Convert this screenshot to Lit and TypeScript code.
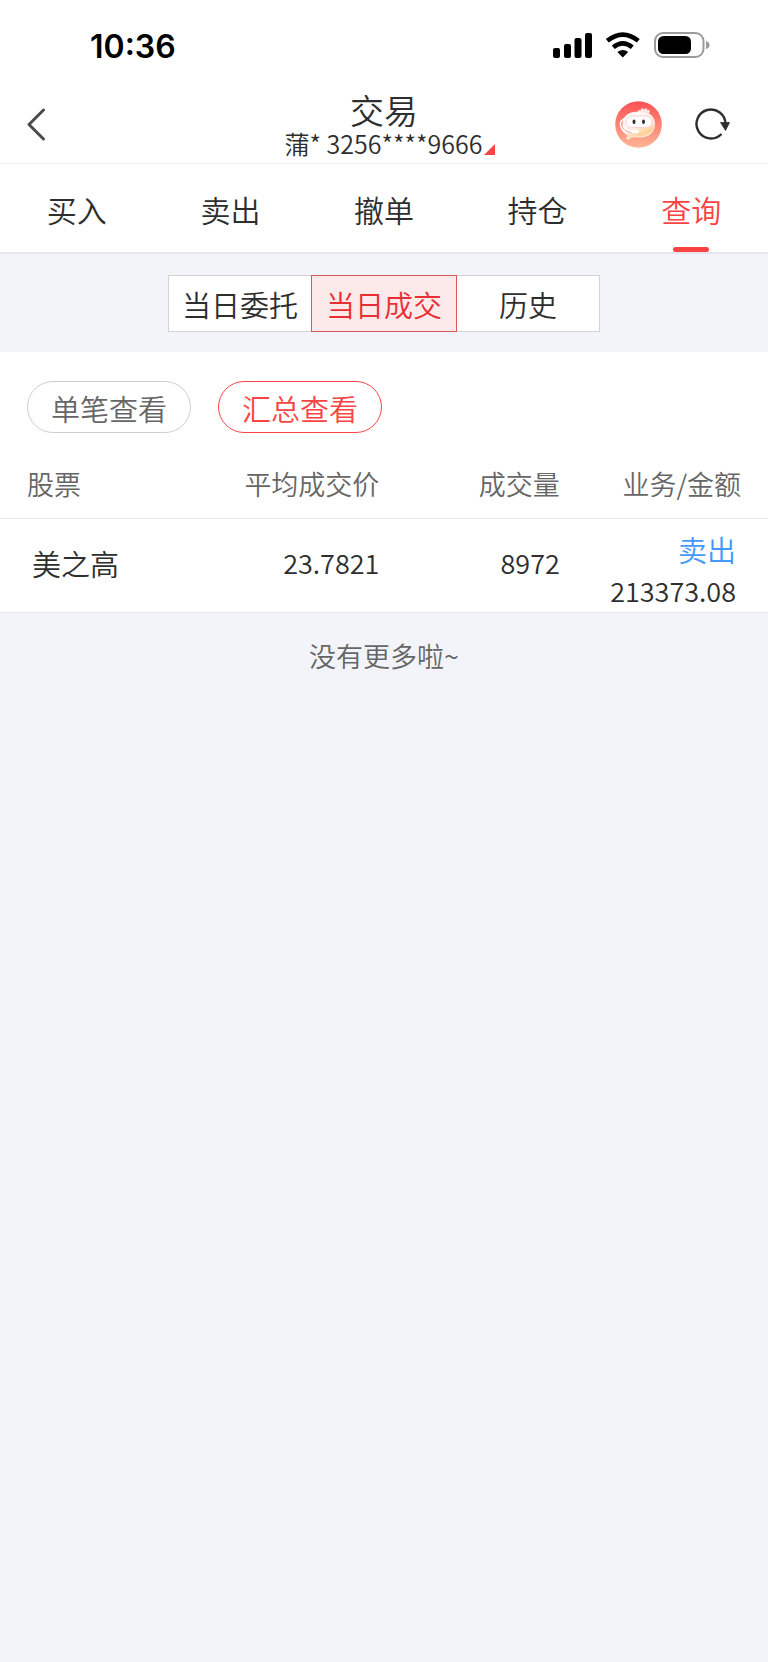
import { LitElement, html, css, svg } from "lit";
import { customElement, state } from "lit/decorators.js";

interface Deal {
  name: string;
  price: string;
  volume: string;
  side: string;
  amount: string;
}

const TABS = ["买入", "卖出", "撤单", "持仓", "查询"];
const SEGMENTS = ["当日委托", "当日成交", "历史"];
const VIEWS = ["单笔查看", "汇总查看"];
const DEALS: Deal[] = [
  { name: "美之高", price: "23.7821", volume: "8972", side: "卖出", amount: "213373.08" },
];

@customElement("status-bar")
class StatusBar extends LitElement {
  static styles = css`
    :host {
      display: flex;
      justify-content: space-between;
      align-items: center;
      height: 90px;
      padding: 0 58px 0 90px;
      color: #000;
    }
    .time {
      font: 600 32px/40px Inter, "Liberation Sans", sans-serif;
      padding-top: 3px;
    }
    svg {
      display: block;
    }
  `;

  render() {
    return html`
      <span class="time">10:36</span>
      <svg width="158" height="28" viewBox="0 0 158 28" role="img" aria-label="信号、无线网络、电池">
        <rect x="1" y="17" width="7" height="10" rx="2" />
        <rect x="12" y="13" width="7" height="14" rx="2" />
        <rect x="22.5" y="7" width="7" height="20" rx="2" />
        <rect x="33" y="2" width="7" height="25" rx="2" />
        <g fill="none" stroke="#000" stroke-width="4.6">
          <path d="M55.3 9.8 Q70.8 -2.6 86.3 9.8" />
          <path d="M61.3 16.2 Q70.8 8.4 80.3 16.2" />
        </g>
        <path d="M65.4 21 Q70.8 16.8 76.2 21 L70.8 26.5 Z" />
        <rect x="103" y="2" width="48.5" height="24" rx="8" fill="none" stroke="#9b9b9b" stroke-width="2" />
        <rect x="106" y="5" width="33" height="18" rx="5.5" />
        <path d="M154 10 Q157.500 11 157.500 14 T154 18 Z" fill="#9b9b9b" />
      </svg>
    `;
  }
}

const backIcon = svg`<path d="M17.500 3 L3 17.500 L17.500 32" fill="none" stroke="#4a4a4a" stroke-width="3" stroke-linecap="round" stroke-linejoin="round" />`;

@customElement("app-root")
class AppRoot extends LitElement {
  @state() tab = 4;
  @state() segment = 1;
  @state() view = 1;

  static styles = css`
    :host {
      display: flex;
      flex-direction: column;
      min-height: 100vh;
      background: #f3f4f9;
      color: #2e2e2e;
      font-family: "Noto Sans CJK SC", sans-serif;
      font-weight: 350;
    }
    * {
      box-sizing: border-box;
    }
    button {
      margin: 0;
      padding: 0;
      border: 0;
      background: none;
      color: inherit;
      font: inherit;
      cursor: pointer;
    }
    svg {
      display: block;
    }
    .top {
      background: #fff;
    }
    .header {
      display: grid;
      grid-template-columns: 1fr auto 1fr;
      align-items: center;
      height: 74px;
      padding: 0 26px 5px;
      border-bottom: 1px solid #ebecf5;
    }
    .back {
      justify-self: start;
    }
    .heading {
      display: flex;
      flex-direction: column;
      align-items: center;
      margin-left: 12px;
    }
    .title {
      margin: 0;
      font-size: 34px;
      line-height: 38px;
      font-weight: 350;
      padding-right: 12px;
    }
    .account {
      display: flex;
      align-items: flex-end;
      font-size: 25px;
      line-height: 28px;
    }
    .corner {
      margin: 0 0 2px 2px;
    }
    .actions {
      justify-self: end;
      display: flex;
      align-items: center;
      gap: 32px;
      padding-right: 12px;
    }
    .tabs {
      display: flex;
      height: 90px;
      background: #fff;
      border-bottom: 2px solid #e4e5ef;
    }
    .tab {
      flex: 1;
      display: grid;
      grid-template-rows: 1fr auto;
      justify-items: center;
      align-items: center;
      padding-top: 6px;
      font-size: 30px;
      line-height: 40px;
    }
    .tab::after {
      content: "";
      width: 36px;
      height: 5px;
      border-radius: 3px;
    }
    .tab.on {
      color: #fa4444;
    }
    .tab.on::after {
      background: #fa4444;
    }
    .segments {
      display: flex;
      justify-content: center;
      padding: 21px 0 20px;
    }
    .segment {
      width: 144px;
      height: 57px;
      background: #fff;
      border: 1px solid #d3d3d3;
      font-size: 29px;
      line-height: 40px;
    }
    .segment + .segment {
      margin-left: -1px;
    }
    .segment.on {
      position: relative;
      width: 146px;
      background: #fce9ea;
      border-color: #d9575b;
      color: #e92f33;
    }
    .panel {
      background: #fff;
    }
    .views {
      display: flex;
      gap: 27px;
      padding: 29px 27px 17px;
    }
    .view {
      width: 164px;
      height: 52px;
      border: 1px solid #cfcfcf;
      border-radius: 26px;
      color: #666;
      font-size: 29px;
      line-height: 40px;
      padding-top: 1px;
    }
    .view.on {
      border-color: #fa4444;
      color: #fa4444;
    }
    .deals {
      width: 100%;
      border-collapse: collapse;
      table-layout: fixed;
      text-align: right;
    }
    .c1 {
      width: 24%;
    }
    .c2 {
      width: 25.4%;
    }
    .c3 {
      width: 23.5%;
    }
    th {
      height: 68px;
      padding: 0;
      border-bottom: 1px solid #ebebeb;
      color: #666;
      font-size: 27px;
      line-height: 40px;
      font-weight: 350;
    }
    td {
      height: 94px;
      padding: 0 0 5px;
      border-bottom: 1px solid #e8e9ef;
      font-size: 27px;
      line-height: 42px;
    }
    th:first-child {
      padding-left: 27px;
      text-align: left;
    }
    th:last-child {
      padding-right: 27px;
    }
    td:first-child {
      padding-left: 32px;
      text-align: left;
      font-size: 29px;
    }
    td:last-child {
      padding: 9px 32px 0 0;
    }
    .side {
      display: block;
      color: #449afa;
      font-size: 29px;
    }
    .amount {
      display: block;
    }
    .end {
      margin: 0;
      padding: 23px 0;
      color: #666;
      text-align: center;
      font-size: 27px;
      line-height: 40px;
    }
  `;

  render() {
    return html`
      <div class="top">
        <status-bar></status-bar>
        <header class="header">
          <button class="back" aria-label="返回">
            <svg width="21" height="35" viewBox="0 0 21 35">${backIcon}</svg>
          </button>
          <div class="heading">
            <h1 class="title">交易</h1>
            <button class="account">
              <span>蒲* 3256****9666</span>
              <svg class="corner" width="11" height="11" viewBox="0 0 11 11">
                <path d="M11 0 V11 H0 Z" fill="#fa4444" />
              </svg>
            </button>
          </div>
          <div class="actions">
            <button aria-label="智能客服">${this.avatar()}</button>
            <button aria-label="刷新">
              <svg width="36" height="34" viewBox="0 0 36 34">
                <path d="M27.500 27 A14.500 14.500 0 1 1 31.500 17" fill="none" stroke="#2e2e2e" stroke-width="2.400" />
                <path d="M26.500 15.500 L35.500 15.500 L31.500 23.500 Z" fill="#2e2e2e" stroke="#2e2e2e" stroke-width="0.800" stroke-linejoin="round" />
              </svg>
            </button>
          </div>
        </header>
      </div>
      <nav class="tabs">
        ${TABS.map(
          (t, i) => html`<button class="tab ${i === this.tab ? "on" : ""}" @click=${() => (this.tab = i)}>${t}</button>`
        )}
      </nav>
      <div class="segments">
        ${SEGMENTS.map(
          (s, i) => html`<button class="segment ${i === this.segment ? "on" : ""}" @click=${() => (this.segment = i)}>${s}</button>`
        )}
      </div>
      <main class="panel">
        <div class="views">
          ${VIEWS.map(
            (v, i) => html`<button class="view ${i === this.view ? "on" : ""}" @click=${() => (this.view = i)}>${v}</button>`
          )}
        </div>
        <table class="deals">
          <colgroup><col class="c1" /><col class="c2" /><col class="c3" /><col /></colgroup>
          <thead>
            <tr><th>股票</th><th>平均成交价</th><th>成交量</th><th>业务/金额</th></tr>
          </thead>
          <tbody>
            ${DEALS.map(
              (d) => html`<tr>
                <td>${d.name}</td>
                <td>${d.price}</td>
                <td>${d.volume}</td>
                <td><span class="side">${d.side}</span><span class="amount">${d.amount}</span></td>
              </tr>`
            )}
          </tbody>
        </table>
      </main>
      <p class="end">没有更多啦~</p>
    `;
  }

  avatar() {
    return html`
      <svg width="47" height="47" viewBox="0 0 47 47">
        <defs>
          <linearGradient id="bg" x1="0" y1="0" x2="0" y2="1">
            <stop offset="0" stop-color="#fb5053" />
            <stop offset="0.55" stop-color="#fc8a78" />
            <stop offset="1" stop-color="#ffb596" />
          </linearGradient>
          <linearGradient id="face" x1="0.2" y1="0" x2="0.8" y2="1">
            <stop offset="0" stop-color="#fff" />
            <stop offset="0.5" stop-color="#ffeae7" />
            <stop offset="0.8" stop-color="#ffd095" />
            <stop offset="1" stop-color="#fff0e4" />
          </linearGradient>
        </defs>
        <circle cx="23.500" cy="23.500" r="23.300" fill="url(#bg)" />
        <path d="M23 11 Q23 8 25.500 9.500 Q26.500 5 29 8.500 Q32 6 32 9 Q35.500 8 34.500 12 Z" fill="#ffe3df" />
        <path d="M9 18 Q4 20 6 26 Q8 31 12 33" fill="none" stroke="#fff" stroke-width="1.400" stroke-linecap="round" />
        <path d="M24 11 C34 10.500 40 15 39.500 24 C39 32.500 33 36 24 36 C19 36 17 35 15 37.500 Q13 39 11.500 37.500 Q14 35 12.500 33 C8.500 30 7.500 27 8 22 C8.500 14 15 11 24 11 Z" fill="url(#face)" stroke="#fff" stroke-width="0.700" />
        <rect x="11" y="15" width="26" height="11.500" rx="5.700" fill="#fff" stroke="#ffd3cd" />
        <ellipse cx="19" cy="20.800" rx="1.500" ry="2.200" fill="#3a2828" />
        <ellipse cx="28.500" cy="20.800" rx="1.500" ry="2.200" fill="#3a2828" />
        <path d="M8 26.500 Q11 31.500 19 31.800" fill="none" stroke="#ff9c8c" stroke-width="0.800" />
        <path d="M8 25 Q11 30 19 30.300" fill="none" stroke="#fff" stroke-width="1.400" />
        <rect x="16" y="28.700" width="8" height="3.200" rx="1.600" fill="#fff" />
      </svg>
    `;
  }
}
